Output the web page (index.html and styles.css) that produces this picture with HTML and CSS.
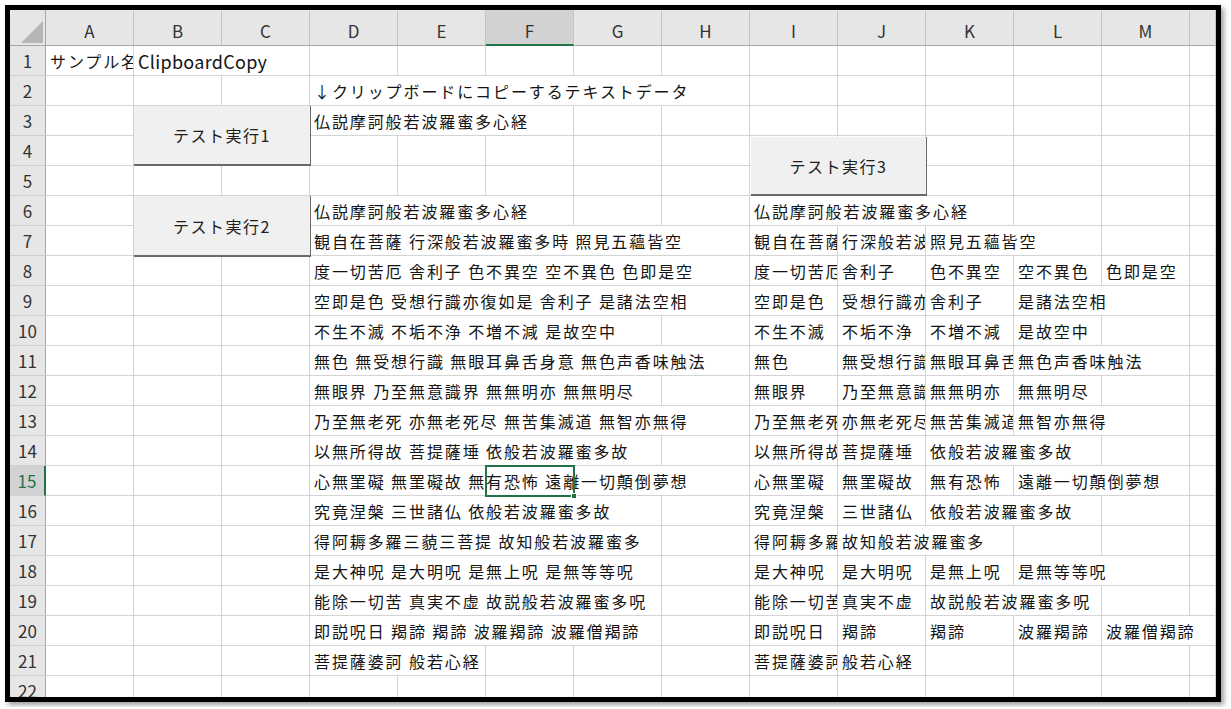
FILE: index.html
```html
<!DOCTYPE html>
<html lang="ja">
<head>
<meta charset="utf-8">
<title>ClipboardCopy</title>
<link rel="stylesheet" href="styles.css">
</head>
<body>
<div class="frame">
  <div class="sheet">
    <div class="corner"></div>
    <div class="ch">A</div><div class="ch">B</div><div class="ch">C</div><div class="ch">D</div><div class="ch">E</div><div class="ch sel">F</div><div class="ch">G</div><div class="ch">H</div><div class="ch">I</div><div class="ch">J</div><div class="ch">K</div><div class="ch">L</div><div class="ch">M</div><div class="ch"></div>

    <div class="rh">1</div>
    <div class="c">サンプル名</div><div class="c s2 lat">ClipboardCopy</div>
    <div class="c"></div><div class="c"></div><div class="c"></div><div class="c"></div><div class="c"></div><div class="c"></div><div class="c"></div><div class="c"></div><div class="c"></div><div class="c"></div><div class="c"></div>

    <div class="rh">2</div>
    <div class="c"></div><div class="c"></div><div class="c"></div>
    <div class="c s5">↓クリップボードにコピーするテキストデータ</div>
    <div class="c"></div><div class="c"></div><div class="c"></div><div class="c"></div><div class="c"></div><div class="c"></div>

    <div class="rh">3</div>
    <div class="c"></div><div class="c"></div><div class="c"></div>
    <div class="c s3">仏説摩訶般若波羅蜜多心経</div>
    <div class="c"></div><div class="c"></div><div class="c"></div><div class="c"></div><div class="c"></div><div class="c"></div><div class="c"></div><div class="c"></div>

    <div class="rh">4</div>
    <div class="c"></div><div class="c"></div><div class="c"></div><div class="c"></div><div class="c"></div><div class="c"></div><div class="c"></div><div class="c"></div><div class="c"></div><div class="c"></div><div class="c"></div><div class="c"></div><div class="c"></div><div class="c"></div>

    <div class="rh">5</div>
    <div class="c"></div><div class="c"></div><div class="c"></div><div class="c"></div><div class="c"></div><div class="c"></div><div class="c"></div><div class="c"></div><div class="c"></div><div class="c"></div><div class="c"></div><div class="c"></div><div class="c"></div><div class="c"></div>

    <div class="rh">6</div>
    <div class="c"></div><div class="c"></div><div class="c"></div>
    <div class="c s3">仏説摩訶般若波羅蜜多心経</div>
    <div class="c"></div><div class="c"></div>
    <div class="c s3">仏説摩訶般若波羅蜜多心経</div>
    <div class="c"></div><div class="c"></div><div class="c"></div>

    <div class="rh">7</div>
    <div class="c"></div><div class="c"></div><div class="c"></div>
    <div class="c s5">観自在菩薩 行深般若波羅蜜多時 照見五蘊皆空</div>
    <div class="c">観自在菩薩</div><div class="c">行深般若波羅蜜多時</div><div class="c s2">照見五蘊皆空</div>
    <div class="c"></div><div class="c"></div>

    <div class="rh">8</div>
    <div class="c"></div><div class="c"></div><div class="c"></div>
    <div class="c s5">度一切苦厄 舎利子 色不異空 空不異色 色即是空</div>
    <div class="c">度一切苦厄</div><div class="c">舎利子</div><div class="c">色不異空</div><div class="c">空不異色</div><div class="c">色即是空</div>
    <div class="c"></div>

    <div class="rh">9</div>
    <div class="c"></div><div class="c"></div><div class="c"></div>
    <div class="c s5">空即是色 受想行識亦復如是 舎利子 是諸法空相</div>
    <div class="c">空即是色</div><div class="c">受想行識亦復如是</div><div class="c">舎利子</div><div class="c s2">是諸法空相</div>
    <div class="c"></div>

    <div class="rh">10</div>
    <div class="c"></div><div class="c"></div><div class="c"></div>
    <div class="c s4">不生不滅 不垢不浄 不増不減 是故空中</div>
    <div class="c"></div>
    <div class="c">不生不滅</div><div class="c">不垢不浄</div><div class="c">不増不減</div><div class="c">是故空中</div>
    <div class="c"></div><div class="c"></div>

    <div class="rh">11</div>
    <div class="c"></div><div class="c"></div><div class="c"></div>
    <div class="c s5">無色 無受想行識 無眼耳鼻舌身意 無色声香味触法</div>
    <div class="c">無色</div><div class="c">無受想行識</div><div class="c">無眼耳鼻舌身意</div><div class="c s2">無色声香味触法</div>
    <div class="c"></div>

    <div class="rh">12</div>
    <div class="c"></div><div class="c"></div><div class="c"></div>
    <div class="c s4">無眼界 乃至無意識界 無無明亦 無無明尽</div>
    <div class="c"></div>
    <div class="c">無眼界</div><div class="c">乃至無意識界</div><div class="c">無無明亦</div><div class="c">無無明尽</div>
    <div class="c"></div><div class="c"></div>

    <div class="rh">13</div>
    <div class="c"></div><div class="c"></div><div class="c"></div>
    <div class="c s5">乃至無老死 亦無老死尽 無苦集滅道 無智亦無得</div>
    <div class="c">乃至無老死</div><div class="c">亦無老死尽</div><div class="c">無苦集滅道</div><div class="c s2">無智亦無得</div>
    <div class="c"></div>

    <div class="rh">14</div>
    <div class="c"></div><div class="c"></div><div class="c"></div>
    <div class="c s4">以無所得故 菩提薩埵 依般若波羅蜜多故</div>
    <div class="c"></div>
    <div class="c">以無所得故</div><div class="c">菩提薩埵</div><div class="c s2">依般若波羅蜜多故</div>
    <div class="c"></div><div class="c"></div>

    <div class="rh sel">15</div>
    <div class="c"></div><div class="c"></div><div class="c"></div>
    <div class="c s5">心無罣礙 無罣礙故 無有恐怖 遠離一切顛倒夢想</div>
    <div class="c">心無罣礙</div><div class="c">無罣礙故</div><div class="c">無有恐怖</div><div class="c s2">遠離一切顛倒夢想</div>
    <div class="c"></div>

    <div class="rh">16</div>
    <div class="c"></div><div class="c"></div><div class="c"></div>
    <div class="c s4">究竟涅槃 三世諸仏 依般若波羅蜜多故</div>
    <div class="c"></div>
    <div class="c">究竟涅槃</div><div class="c">三世諸仏</div><div class="c s2">依般若波羅蜜多故</div>
    <div class="c"></div><div class="c"></div>

    <div class="rh">17</div>
    <div class="c"></div><div class="c"></div><div class="c"></div>
    <div class="c s4">得阿耨多羅三藐三菩提 故知般若波羅蜜多</div>
    <div class="c"></div>
    <div class="c">得阿耨多羅三藐三菩提</div><div class="c s2">故知般若波羅蜜多</div>
    <div class="c"></div><div class="c"></div><div class="c"></div>

    <div class="rh">18</div>
    <div class="c"></div><div class="c"></div><div class="c"></div>
    <div class="c s4">是大神呪 是大明呪 是無上呪 是無等等呪</div>
    <div class="c"></div>
    <div class="c">是大神呪</div><div class="c">是大明呪</div><div class="c">是無上呪</div><div class="c s2">是無等等呪</div>
    <div class="c"></div>

    <div class="rh">19</div>
    <div class="c"></div><div class="c"></div><div class="c"></div>
    <div class="c s4">能除一切苦 真実不虚 故説般若波羅蜜多呪</div>
    <div class="c"></div>
    <div class="c">能除一切苦</div><div class="c">真実不虚</div><div class="c s2">故説般若波羅蜜多呪</div>
    <div class="c"></div><div class="c"></div>

    <div class="rh">20</div>
    <div class="c"></div><div class="c"></div><div class="c"></div>
    <div class="c s4">即説呪日 羯諦 羯諦 波羅羯諦 波羅僧羯諦</div>
    <div class="c"></div>
    <div class="c">即説呪日</div><div class="c">羯諦</div><div class="c">羯諦</div><div class="c">波羅羯諦</div><div class="c s2">波羅僧羯諦</div>

    <div class="rh">21</div>
    <div class="c"></div><div class="c"></div><div class="c"></div>
    <div class="c s2">菩提薩婆訶 般若心経</div>
    <div class="c"></div><div class="c"></div><div class="c"></div>
    <div class="c">菩提薩婆訶</div><div class="c">般若心経</div>
    <div class="c"></div><div class="c"></div><div class="c"></div><div class="c"></div>

    <div class="rh">22</div>
    <div class="c"></div><div class="c"></div><div class="c"></div><div class="c"></div><div class="c"></div><div class="c"></div><div class="c"></div><div class="c"></div><div class="c"></div><div class="c"></div><div class="c"></div><div class="c"></div><div class="c"></div><div class="c"></div>

    <div class="btn btn1">テスト実行1</div>
    <div class="btn btn2">テスト実行2</div>
    <div class="btn btn3">テスト実行3</div>
    <div class="selbox"><span class="handle"></span></div>
  </div>
</div>
</body>
</html>
```

FILE: styles.css
```css
* { box-sizing: border-box; }

body {
  margin: 0;
  background: #ffffff;
  font-family: "Noto Sans CJK JP", "Noto Sans", sans-serif;
}

.frame {
  margin: 5px;
  width: 1216px;
  height: 697px;
  border: 5px solid #000000;
  overflow: hidden;
  box-shadow: 3px 3px 5px rgba(0, 0, 0, 0.38);
  background: #ffffff;
}

.sheet {
  position: relative;
  display: grid;
  grid-template-columns: 36px repeat(13, 88px) 1fr;
  grid-template-rows: 36px;
  grid-auto-rows: 30px;
}

.corner {
  position: relative;
  background: #e6e6e6;
  border-right: 1px solid #a6a6a6;
  border-bottom: 1px solid #a6a6a6;
}

.corner::after {
  content: "";
  position: absolute;
  right: 2px;
  bottom: 2px;
  width: 0;
  height: 0;
  border-left: 22px solid transparent;
  border-bottom: 22px solid #b5b5b5;
}

.ch {
  display: flex;
  align-items: center;
  justify-content: center;
  padding-top: 6px;
  background: #e6e6e6;
  border-right: 1px solid #c3c3c3;
  border-bottom: 1px solid #a6a6a6;
  color: #333333;
  font-size: 17px;
}

.ch.sel {
  background: #d2d2d2;
  border-bottom: 2px solid #217346;
}

.rh {
  display: flex;
  align-items: center;
  justify-content: center;
  background: #e6e6e6;
  border-right: 1px solid #a6a6a6;
  border-bottom: 1px solid #cfcfcf;
  color: #333333;
  font-size: 17px;
}

.rh.sel {
  background: #d2d2d2;
  color: #217346;
  border-right: 2px solid #217346;
}

.c {
  display: flex;
  align-items: center;
  padding: 0 0 0 4px;
  border-right: 1px solid #d4d4d4;
  border-bottom: 1px solid #d4d4d4;
  white-space: nowrap;
  overflow: hidden;
  font-size: 16px;
  letter-spacing: 1.9px;
  color: #141414;
}

.s2 { grid-column: span 2; }
.s3 { grid-column: span 3; }
.s4 { grid-column: span 4; }
.s5 { grid-column: span 5; }

.lat {
  font-size: 18px;
  letter-spacing: 0.3px;
}

.btn {
  position: absolute;
  display: flex;
  align-items: center;
  justify-content: center;
  background: #f0f0f0;
  border-right: 1px solid #6a6a6a;
  border-bottom: 2px solid #6a6a6a;
  color: #1e1e1e;
  font-size: 16px;
  letter-spacing: 1.5px;
}

.btn1 { left: 124px; top: 96px; width: 177px; height: 60px; }
.btn2 { left: 124px; top: 186px; width: 177px; height: 61px; }
.btn3 { left: 741px; top: 127px; width: 176px; height: 59px; }

.selbox {
  position: absolute;
  left: 475px;
  top: 455px;
  width: 90px;
  height: 32px;
  border: 2px solid #217346;
}

.handle {
  position: absolute;
  right: -4px;
  bottom: -4px;
  width: 6px;
  height: 6px;
  background: #217346;
  border: 1px solid #ffffff;
}
```
